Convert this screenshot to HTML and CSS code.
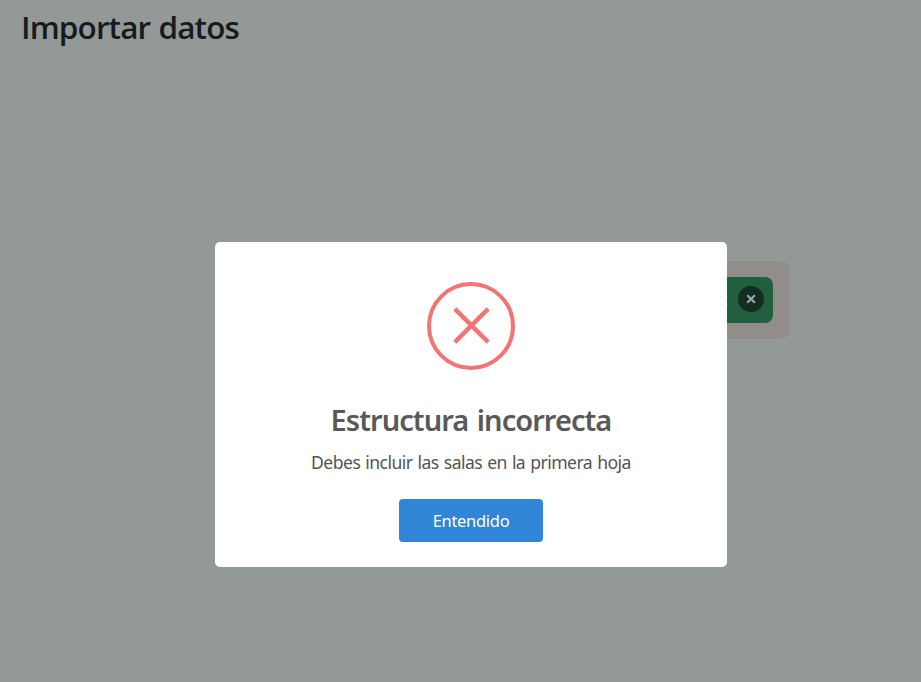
FILE: index.html
```html
<!DOCTYPE html>
<html lang="es">
<head>
<meta charset="utf-8">
<title>Importar datos</title>
<link rel="stylesheet" href="styles.css">
</head>
<body>
<main class="page">
  <h1 class="page-title">Importar datos</h1>
  <section class="dropzone">
    <div class="file">
      <span class="file-name">x</span>
      <button class="remove" aria-label="Quitar archivo">
        <svg width="26" height="26" viewBox="0 0 26 26"><path d="M9.2 9.2l7.6 7.6M16.8 9.2l-7.6 7.6" stroke="#a2a6a4" stroke-width="2.1" fill="none"/></svg>
      </button>
    </div>
  </section>
</main>
<div class="overlay">
  <div class="modal" role="dialog">
    <svg class="error-icon" width="88" height="88" viewBox="0 0 88 88" fill="none" stroke="#f27474">
      <circle cx="44" cy="44" r="42" stroke-width="4"/>
      <path d="M29.4 28.4l30.2 30.2M59.6 28.4l-30.2 30.2" stroke-width="4.4" stroke-linecap="square"/>
    </svg>
    <h2 class="modal-title">Estructura incorrecta</h2>
    <p class="modal-text">Debes incluir las salas en la primera hoja</p>
    <button class="confirm">Entendido</button>
  </div>
</div>
</body>
</html>
```
FILE: styles.css
```css
* { box-sizing: border-box; }
body {
  margin: 0;
  height: 682px;
  overflow: hidden;
  background: #929996;
  font-family: "Segoe UI", "Noto Sans", "Open Sans", sans-serif;
}
h1, h2, p { margin: 0; }
button { border: 0; padding: 0; font-family: inherit; }
.page { height: 100%; }
.page-title {
  height: 261px;
  padding: 5px 0 0 21px;
  color: #171b1f;
  font-family: "Segoe UI", "Open Sans", sans-serif;
  font-size: 31.5px;
  font-weight: 600;
  line-height: 44px;
  letter-spacing: -0.9px;
  word-spacing: 1px;
}
.dropzone {
  width: 489px;
  height: 78px;
  margin-left: 300px;
  padding: 16px;
  background: #918d8b;
  border-radius: 8px;
}
.file {
  height: 46px;
  padding: 0 9px 2px;
  display: flex;
  align-items: center;
  justify-content: flex-end;
  gap: 10px;
  background: #215f3e;
  border-radius: 8px;
}
.file-name {
  color: #a2a6a4;
  font-size: 16px;
  line-height: 24px;
}
.remove {
  width: 26px;
  height: 26px;
  border-radius: 50%;
  background: #132d20;
}
.remove svg { display: block; }
.overlay {
  position: absolute;
  inset: 0;
  padding: 242px 0 0 215px;
}
.modal {
  width: 512px;
  height: 325px;
  padding-top: 40px;
  display: flex;
  flex-direction: column;
  align-items: center;
  background: #fff;
  border-radius: 5px;
}
.error-icon { flex: none; }
.modal-title {
  margin-top: 28px;
  color: #595959;
  font-size: 29px;
  font-weight: 600;
  line-height: 44px;
  letter-spacing: -0.95px;
  word-spacing: 2px;
  white-space: nowrap;
}
.modal-text {
  margin-top: 7px;
  color: #545454;
  font-size: 17.6px;
  line-height: 27px;
  letter-spacing: -0.55px;
  word-spacing: 1px;
  white-space: nowrap;
}
.confirm {
  width: 144px;
  height: 43px;
  margin-top: 23px;
  background: #3085d6;
  border-radius: 4px;
  color: #fff;
  font-size: 16.5px;
  letter-spacing: -0.3px;
}
```
